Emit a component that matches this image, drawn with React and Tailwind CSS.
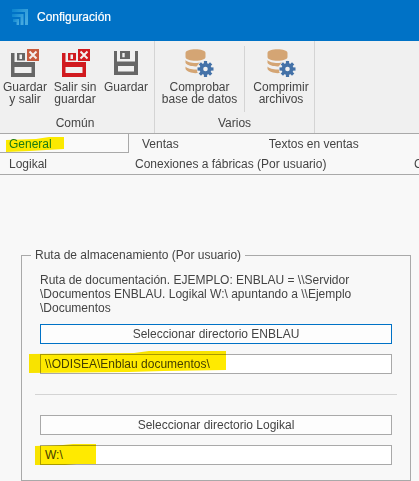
import React from "react";

function Floppy({ color, badge }) {
  if (!badge) {
    return (
      <svg className="block shrink-0" width="30" height="30" viewBox="0 0 30 30">
        <g transform="translate(3 2)" fill={color} fillRule="evenodd">
          <path d="M0 0H3V10.500H21V0H24V24H0ZM4 15V20.500H20V15Z" />
          <path d="M6 0H16V8H6ZM8.300 2V6.300H10.700V2Z" />
        </g>
      </svg>
    );
  }
  return (
    <svg className="block shrink-0" width="30" height="30" viewBox="0 0 30 30">
      <g transform="translate(0 4)" fill={color} fillRule="evenodd">
        <path d="M0 0H3.500V9H24V24H0ZM3.500 14V20H20.500V14Z" />
        <path d="M6 0H14V7.500H6ZM8.500 1.500V6H11V1.500Z" />
      </g>
      <path d="M15 0H29V13H15Z" fill="#f0f0f0" />
      <rect x="16" y="0" width="12" height="12" fill={badge} />
      <path d="M18.500 2.500L25.500 9.500M25.500 2.500L18.500 9.500" stroke="#f4f0ee" strokeWidth="2" />
    </svg>
  );
}

const TEETH = [0, 45, 90, 135, 180, 225, 270, 315];

function Database() {
  return (
    <svg className="block shrink-0" width="30" height="30" viewBox="0 0 30 30">
      <g fill="#d4a574">
        <path d="M0.500 4C0.500 -1 20.500 -1 20.500 4V8C20.500 13 0.500 13 0.500 8Z" />
        <path d="M0.500 11C3.500 15 17.500 15 20.500 11V14C17.500 18.500 3.500 18.500 0.500 14Z" />
        <path d="M0.500 17.500C3.500 21.500 17.500 21.500 20.500 17.500V20C17.500 25.500 3.500 25.500 0.500 20Z" />
      </g>
      <circle cx="20.500" cy="20" r="8.800" fill="#f0f0f0" />
      <g transform="translate(20.500 20)" fill="#4472a8">
        {TEETH.map((a) => (
          <rect key={a} x="-1.600" y="-8" width="3.200" height="4" transform={`rotate(${a})`} />
        ))}
        <circle r="6" />
        <circle r="2.300" fill="#f0f0f0" />
      </g>
    </svg>
  );
}

function Tool({ className, icon, lines }) {
  return (
    <div className={`flex shrink-0 flex-col items-center ${className}`}>
      {icon}
      <div className="mt-[2px] text-center leading-[12px] whitespace-nowrap">
        {lines.map((l) => (
          <div key={l}>{l}</div>
        ))}
      </div>
    </div>
  );
}

function Field({ children }) {
  return (
    <div className="flex h-5 items-center border border-[#a9a9a9] bg-white pl-1">{children}</div>
  );
}

export default function App() {
  return (
    <div
      className="flex h-[481px] w-[419px] flex-col overflow-hidden bg-[#f8f8f8] text-[12px] text-[#444]"
      style={{ fontFamily: '"Liberation Sans", Arial, sans-serif' }}
    >
      <header className="flex h-[41px] shrink-0 items-start bg-[#0072c6] pt-[9px] pl-3 text-white">
        <svg className="block" width="16" height="16" viewBox="0 0 16 16">
          <defs>
            <linearGradient id="fade" x1="0" x2="1" y1="0" y2="0.6">
              <stop offset="0" stopColor="#0a84cf" />
              <stop offset="1" stopColor="#45a9df" />
            </linearGradient>
          </defs>
          <path d="M0 0H16V16H13V3H0Z" fill="url(#fade)" />
          <path d="M0 5H11.500V16H8.500V8H0Z" fill="url(#fade)" />
          <path d="M1 10H7V16H4.500V13H1Z" fill="url(#fade)" />
        </svg>
        <span className="ml-[9px] leading-[17px] [-webkit-text-stroke:0.2px_white]">Configuración</span>
      </header>

      <section className="flex h-[93px] shrink-0 border-b border-[#a9a9a9] bg-[#f0f0f0]">
        <div className="flex w-[155px] flex-col border-r border-[#d4d4d4]">
          <div className="flex h-[74px] pt-2">
            <Tool className="w-[50px]" icon={<div className="pl-[2px]"><Floppy color="#666666" badge="#c75b3e" /></div>} lines={["Guardar", "y salir"]} />
            <Tool className="w-[50px]" icon={<div className="pl-[3px]"><Floppy color="#d11a1f" badge="#d11a1f" /></div>} lines={["Salir sin", "guardar"]} />
            <Tool className="w-[52px]" icon={<Floppy color="#666666" />} lines={["Guardar"]} />
          </div>
          <div className="pr-1 text-center leading-[16px]">Común</div>
        </div>
        <div className="flex w-[160px] flex-col border-r border-[#d4d4d4]">
          <div className="flex h-[74px] pt-2">
            <Tool className="w-[89px]" icon={<Database />} lines={["Comprobar", "base de datos"]} />
            <div className="-mt-[3px] h-[66px] w-px shrink-0 bg-[#d4d4d4]" />
            <Tool className="w-[72px]" icon={<div className="pl-px"><Database /></div>} lines={["Comprimir", "archivos"]} />
          </div>
          <div className="text-center leading-[16px]">Varios</div>
        </div>
      </section>

      <nav className="flex h-[41px] shrink-0 flex-col overflow-hidden border-b border-[#a9a9a9] whitespace-nowrap">
        <div className="flex h-[19px] items-center">
          <div className="relative h-[19px] w-[129px] border-r border-b border-[#a9a9a9] bg-[#fafafa] pl-[9px] leading-[20px]">
            <svg className="absolute top-[3px] left-[6px]" width="58" height="16" viewBox="0 0 58 16">
              <path d="M0 3L30 2L43 0H58V12L40 13L24 14L0 15Z" fill="#fbe900" />
            </svg>
            <span className="relative text-[#1c7a12]">General</span>
          </div>
          <span className="ml-[13px]">Ventas</span>
          <span className="ml-[90px]">Textos en ventas</span>
        </div>
        <div className="flex h-[21px] items-center">
          <span className="w-[126px] shrink-0 pl-[9px]">Logikal</span>
          <span className="ml-[9px] w-[279px] shrink-0">Conexiones a fábricas (Por usuario)</span>
          <span className="shrink-0">C</span>
        </div>
      </nav>

      <main className="flex flex-1 flex-col pt-[72px] pr-2 pl-[21px]">
        <section className="flex h-[234px] shrink-0 flex-col">
          <div className="flex h-[17px] items-center">
            <div className="h-[9px] w-[10px] self-end border-t border-l border-[#a9a9a9]" />
            <h2 className="w-[214px] pl-1 leading-[17px] whitespace-nowrap">Ruta de almacenamiento (Por usuario)</h2>
            <div className="h-[9px] flex-1 self-end border-t border-r border-[#a9a9a9]" />
          </div>
          <div className="flex flex-1 flex-col border-x border-b border-[#a9a9a9] px-[18px] pt-[9px]">
            <p className="leading-[14px] whitespace-nowrap">
              Ruta de documentación. EJEMPLO: ENBLAU = \\Servidor<br />
              \Documentos ENBLAU. Logikal W:\ apuntando a \\Ejemplo<br />
              \Documentos
            </p>
            <button className="mt-[9px] h-5 shrink-0 border border-[#0072c6] bg-[#fdfdfd]">Seleccionar directorio ENBLAU</button>
            <div className="relative mt-[10px]">
              <Field>{"\\\\ODISEA\\Enblau documentos\\"}</Field>
              <svg className="absolute -top-[3px] -left-[11px] mix-blend-multiply" width="197" height="23" viewBox="0 0 197 23">
                <path d="M0 3L105 2L120 0H197V19L135 20L100 21L0 22Z" fill="#ffea00" />
              </svg>
            </div>
            <div className="-mx-[5px] mt-5 h-px shrink-0 bg-[#d4d4d4]" />
            <button className="mt-5 h-5 shrink-0 border border-[#a9a9a9] bg-[#fdfdfd]">Seleccionar directorio Logikal</button>
            <div className="relative mt-[10px]">
              <Field>W:\</Field>
              <svg className="absolute -top-px -left-[5px] mix-blend-multiply" width="61" height="22" viewBox="0 0 61 22">
                <path d="M0 2L28 1L38 0H61V20H42L30 21H0Z" fill="#ffea00" />
              </svg>
            </div>
          </div>
        </section>
      </main>
    </div>
  );
}
